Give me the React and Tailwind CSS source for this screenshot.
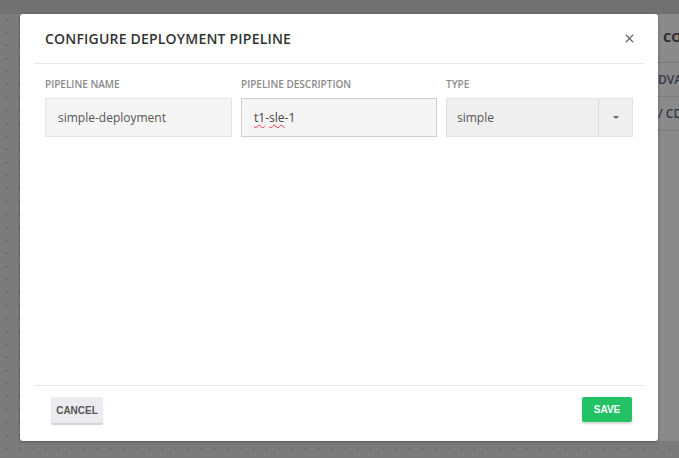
import React from 'react';
import { X } from 'lucide-react';

const sans = { fontFamily: '"Open Sans", "Noto Sans", sans-serif' };
const arial = { fontFamily: '"Liberation Sans", Arial, sans-serif' };

export default function App() {
  return (
    <div className="relative w-[679px] h-[458px] overflow-hidden bg-[#7b7b7b] bg-[radial-gradient(circle,#6c6c6c_1px,transparent_1.3px)] bg-[length:13px_13px]">
      {/* page behind the overlay */}
      <div className="h-[14px] bg-[#717171]" />
      <div className="flex justify-end">
        <div className="w-[62px] h-[427px] bg-[#8a8a8a] flex flex-col whitespace-nowrap overflow-hidden" style={sans}>
          <div className="h-[49px] border-b border-[#7a7a7a] flex items-center pl-[46px] text-[13px] font-bold text-[#2c2c2c]">CO</div>
          <div className="h-[34px] border-b border-[#7a7a7a] flex items-center pl-[41px] text-[12px] font-semibold text-[#30394a]">DVA</div>
          <div className="h-[34px] border-b border-[#7a7a7a] flex items-center pl-[41px] text-[12px] font-semibold text-[#30394a]">/ CD</div>
        </div>
      </div>

      {/* Modal */}
      <div className="absolute left-[20px] top-[14px] w-[638px] h-[427px] bg-white rounded-[3px] shadow-[0_1px_3px_rgba(0,0,0,0.3)] px-[14px] flex flex-col" style={sans}>
        {/* Header */}
        <div className="h-[50px] shrink-0 border-b border-[#e8e8e8] flex items-center justify-between pl-[11px] pr-[8px]">
          <h2 className="text-[14px] font-semibold tracking-[0.2px] text-[#333]">CONFIGURE DEPLOYMENT PIPELINE</h2>
          <X className="w-[13px] h-[13px] text-[#666]" strokeWidth={2.4} />
        </div>

        {/* Fields */}
        <div className="flex-1 pt-[14px] px-[11px] flex gap-[9px]">
          <div className="w-[187px]">
            <div className="h-[12px] mb-[8px] text-[10px] leading-[12px] font-semibold text-[#8a8a8a]">PIPELINE NAME</div>
            <div className="h-[39px] bg-[#f5f5f5] border border-[#e3e3e3] flex items-center pl-[12px] text-[12px] text-[#555]">simple-deployment</div>
          </div>
          <div className="w-[196px]">
            <div className="h-[12px] mb-[8px] text-[10px] leading-[12px] font-semibold text-[#8a8a8a]">PIPELINE DESCRIPTION</div>
            <div className="h-[39px] bg-[#f5f5f5] border border-[#cfcfcf] flex items-center pl-[12px] text-[12px] text-[#444]">
              <span className="underline decoration-wavy decoration-red-500 decoration-[1px] underline-offset-2">t1</span>
              <span>-</span>
              <span className="underline decoration-wavy decoration-red-500 decoration-[1px] underline-offset-2">sle</span>
              <span>-1</span>
            </div>
          </div>
          <div className="w-[187px]">
            <div className="h-[12px] mb-[8px] text-[10px] leading-[12px] font-semibold text-[#8a8a8a]">TYPE</div>
            <div className="h-[39px] bg-[#efefef] border border-[#e3e3e3] flex items-center text-[12px] text-[#555]">
              <span className="flex-1 pl-[10px]">simple</span>
              <span className="w-[34px] h-full border-l border-[#dcdcdc] flex items-center justify-center">
                <span className="w-0 h-0 border-l-[3px] border-r-[3px] border-t-[3px] border-l-transparent border-r-transparent border-t-[#666]" />
              </span>
            </div>
          </div>
        </div>

        {/* Footer */}
        <div className="h-[56px] shrink-0 border-t border-[#e8e8e8] flex items-start justify-between pt-[11px] pl-[17px] pr-[12px]">
          <button className="h-[26px] w-[52px] rounded-[2px] bg-[#ececf0] shadow-[0_2px_1px_rgba(0,0,0,0.18)] text-[10px] font-bold text-[#555]" style={arial}>
            CANCEL
          </button>
          <button className="h-[25px] w-[50px] rounded-[2px] bg-[#23c365] shadow-[0_2px_2px_rgba(0,0,0,0.15)] text-[10px] font-bold text-white" style={arial}>
            SAVE
          </button>
        </div>
      </div>
    </div>
  );
}
